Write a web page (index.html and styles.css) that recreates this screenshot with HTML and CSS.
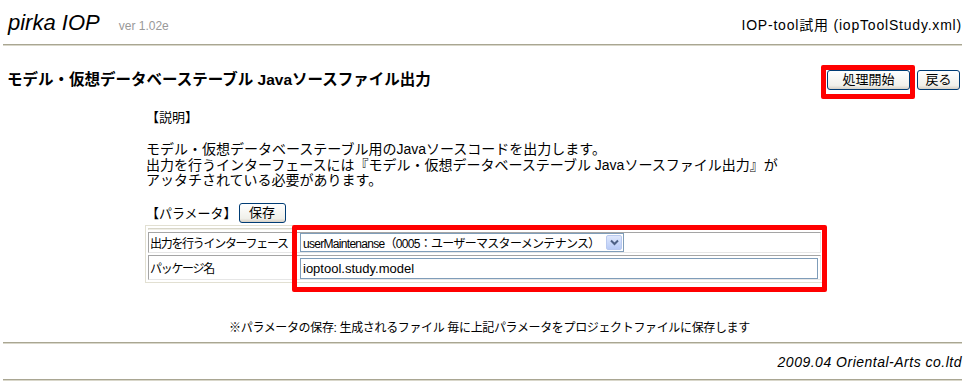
FILE: index.html
```html
<!DOCTYPE html>
<html lang="ja">
<head>
<meta charset="utf-8">
<title>pirka IOP</title>
<link rel="stylesheet" href="styles.css">
</head>
<body>
<header class="top">
  <div class="brand"><span class="logo">pirka IOP</span><span class="ver">ver 1.02e</span></div>
  <div class="project">IOP-tool試用 (iopToolStudy.xml)</div>
</header>
<hr class="rule">
<div class="titlebar">
  <h1 class="title">モデル・仮想データベーステーブル Javaソースファイル出力</h1>
  <div class="actions">
    <span class="mark"><button class="btn btn-start">処理開始</button></span>
    <button class="btn btn-back">戻る</button>
  </div>
</div>
<main class="content">
  <div class="label">【説明】</div>
  <p class="desc">モデル・仮想データベーステーブル用のJavaソースコードを出力します。<br>出力を行うインターフェースには『モデル・仮想データベーステーブル Javaソースファイル出力』が<br>アッタチされている必要があります。</p>
  <div class="paramrow"><span class="label">【パラメータ】</span><button class="btn btn-save">保存</button></div>
  <div class="tablewrap">
    <table class="params">
      <tr class="spacer"><td colspan="2"></td></tr>
      <tr class="row1">
        <td class="key">出力を行うインターフェース</td>
        <td class="val">
          <div class="select"><span class="seltext">userMaintenanse（0005：ユーザーマスターメンテナンス）</span><span class="selbtn"><svg width="9" height="7" viewBox="0 0 9 7"><path d="M1 1.5 L4.5 5 L8 1.5" fill="none" stroke="#4d6185" stroke-width="2"/></svg></span></div>
        </td>
      </tr>
      <tr class="row2">
        <td class="key">パッケージ名</td>
        <td class="val"><input class="text" type="text" value="ioptool.study.model"></td>
      </tr>
    </table>
    <div class="mark-box"></div>
  </div>
  </main>
<p class="note">※パラメータの保存: 生成されるファイル 毎に上記パラメータをプロジェクトファイルに保存します</p>
<hr class="rule">
<footer class="foot">2009.04 Oriental-Arts co.ltd</footer>
<hr class="rule">
</body>
</html>
```
FILE: styles.css
```css
html, body {
  margin: 0;
  padding: 0;
  background: #fff;
  color: #000;
  font-family: "Liberation Sans", "Noto Sans CJK JP", sans-serif;
}
.top {
  display: flex;
  justify-content: space-between;
  align-items: baseline;
  padding: 10px 9px 0 8px;
  height: 44px;
  box-sizing: border-box;
}
.logo {
  font-style: italic;
  font-size: 22px;
}
.ver {
  font-size: 12px;
  color: #999;
  margin-left: 19px;
}
.project {
  font-size: 14px;
  letter-spacing: 0.8px;
}
.rule {
  margin: 0 9px 0 3px;
  height: 0;
  border: 0;
  border-top: 1px solid #a9a692;
  border-bottom: 1px solid #d9d7ca;
}
.titlebar {
  display: flex;
  justify-content: space-between;
  align-items: center;
  padding: 0 11px 0 7px;
  margin-top: 15px;
  height: 34px;
}
.title {
  margin: 0;
  font-size: 15.5px;
  font-weight: bold;
}
.actions {
  display: flex;
  align-items: center;
  gap: 7px;
  padding-top: 4px;
}
.mark { position: relative; display: inline-block; }
.mark::after {
  content: "";
  position: absolute;
  left: -6px; right: -5px; top: -5px; bottom: -9px;
  border: 5px solid #ff0000;
  border-radius: 2px;
}
.btn {
  font-family: "Liberation Sans", "Noto Sans CJK JP", sans-serif;
  font-size: 13px;
  height: 20px;
  padding: 0;
  border: 1px solid #003c74;
  border-radius: 3px;
  background: linear-gradient(#ffffff, #f0f0ea 80%, #d6d0c5);
  color: #000;
  line-height: 18px;
}
.btn-start { width: 83px; }
.btn-back { width: 43px; }
.btn-save { width: 47px; margin-left: 2px; }
.content {
  padding-left: 146px;
  margin-top: 12px;
}
.label { font-size: 13px; }
.desc {
  font-size: 14px;
  line-height: 15.5px;
  margin: 16px 0 14px;
}
.paramrow {
  display: flex;
  align-items: center;
  height: 20px;
}
.tablewrap {
  position: relative;
  margin-top: 2px;
  margin-left: -1px;
  width: 683px;
}
.params {
  width: 679px;
  border: 1px solid #e2e0d2;
  border-spacing: 2px;
  font-size: 12px;
}
.params td {
  border: 1px solid;
  border-color: #a5a5a5 #e6e6e6 #e6e6e6 #a5a5a5;
  padding: 0;
}
.spacer td { height: 0; border-color: #d8d6c8 #efeee6 #efeee6 #d8d6c8; }
.key {
  width: 143px;
  white-space: nowrap;
  overflow: hidden;
  max-width: 143px;
  letter-spacing: -1.3px;
  padding-left: 1px !important;
}
.row1 td { height: 19px; }
.row2 td { height: 22px; }
.val { padding-left: 3px !important; }
.select {
  display: flex;
  align-items: center;
  width: 324px;
  height: 19px;
  box-sizing: border-box;
  border: 1px solid #7f9db9;
  background: #fff;
  font-size: 12px;
}
.seltext { flex: 1; padding-left: 2px; white-space: nowrap; overflow: hidden; letter-spacing: -0.7px; }
.selbtn {
  flex: none;
  width: 16px;
  height: 15px;
  margin-right: 1px;
  display: flex;
  align-items: center;
  justify-content: center;
  background: linear-gradient(#dfe8fd, #b8cbf6);
  border: 1px solid #b9c9ef;
  box-sizing: border-box;
  border-radius: 2px;
}
.text {
  display: block;
  width: 518px;
  height: 21px;
  box-sizing: border-box;
  border: 1px solid #7f9db9;
  padding: 0 2px;
  font-family: "Liberation Sans", "Noto Sans CJK JP", sans-serif;
  font-size: 13px;
  margin-top: 2px;
}
.mark-box {
  position: absolute;
  left: 147px;
  top: 0;
  width: 535px;
  height: 67px;
  box-sizing: border-box;
  border: 5px solid #ff0000;
  border-radius: 2px;
}
.note {
  text-align: center;
  font-size: 12px;
  letter-spacing: -0.35px;
  margin: 35px 0 7px;
  padding-left: 8px;
}
.foot {
  text-align: right;
  font-style: italic;
  font-size: 14px;
  letter-spacing: 0.5px;
  padding: 10px 9px 0 0;
  height: 35px;
  box-sizing: border-box;
}
```
